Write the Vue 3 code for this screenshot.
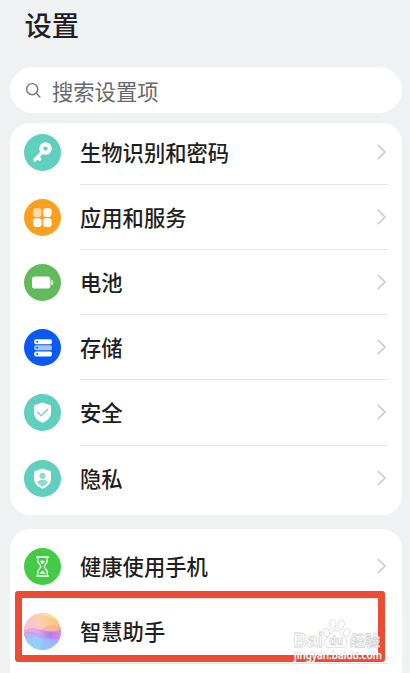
<script setup>
const groups = [
  [
    { id: 'key', label: '生物识别和密码', color: '#5fcfbe' },
    { id: 'apps', label: '应用和服务', color: '#fa9f1e' },
    { id: 'battery', label: '电池', color: '#62bb5a' },
    { id: 'storage', label: '存储', color: '#0a59f5' },
    { id: 'safe', label: '安全', color: '#5fcfbe' },
    { id: 'privacy', label: '隐私', color: '#5fcfbe' },
  ],
  [
    { id: 'health', label: '健康使用手机', color: '#43cb46' },
    { id: 'assistant', label: '智慧助手', color: '#e9c8e8' },
  ],
]
</script>

<template>
  <main class="screen">
    <h1>设置</h1>
    <div class="search">
      <svg width="17" height="17" viewBox="0 0 18 18" fill="none" stroke="#77787a" stroke-width="1.5" stroke-linecap="round">
        <circle cx="7.6" cy="7.6" r="5.9" /><path d="M12 12l3.8 3.9" />
      </svg>
      <span>搜索设置项</span>
    </div>

    <section v-for="(group, g) in groups" :key="g" class="card" :class="'card-' + g">
      <div v-for="item in group" :key="item.id" class="row">
        <svg class="icon" viewBox="0 0 37 37">
          <defs v-if="item.id === 'assistant'">
            <clipPath id="orb"><circle cx="18.5" cy="18.5" r="18.5" /></clipPath>
            <linearGradient id="top" x1="0" y1="0.6" x2="1" y2="0.2"><stop offset="0" stop-color="#f5b3cb" /><stop offset=".5" stop-color="#fbcfae" /><stop offset="1" stop-color="#fcc56c" /></linearGradient>
            <linearGradient id="mid" x1="0" y1="0" x2="1" y2="0"><stop offset="0" stop-color="#f3a9cc" /><stop offset=".4" stop-color="#e3a2e6" /><stop offset=".7" stop-color="#b57af2" /><stop offset="1" stop-color="#d78be8" /></linearGradient>
            <linearGradient id="low" x1="0.8" y1="0" x2=".3" y2="1"><stop offset="0" stop-color="#b58bf5" /><stop offset=".45" stop-color="#a3b2fb" /><stop offset="1" stop-color="#7fd0fd" /></linearGradient>
          </defs>
          <circle cx="18.5" cy="18.5" r="18.5" :fill="item.color" />

          <g v-if="item.id === 'key'">
            <circle cx="21.5" cy="14.5" r="4.2" fill="none" stroke="#fff" stroke-width="4.2" />
            <path d="M18 18.3L10.9 26M13.8 23.3l1.8 1.8" fill="none" stroke="#fff" stroke-width="3.4" stroke-linecap="round" />
          </g>
          <g v-else-if="item.id === 'apps'" fill="#fff">
            <rect x="9" y="9.3" width="8.6" height="8.6" rx="2.8" opacity=".62" />
            <rect x="19" y="9.3" width="8.6" height="8.6" rx="2.8" />
            <rect x="9" y="19.3" width="8.6" height="8.6" rx="2.8" />
            <rect x="19" y="19.3" width="8.6" height="8.6" rx="2.8" />
          </g>
          <g v-else-if="item.id === 'battery'" fill="#fff">
            <rect x="8" y="12.6" width="18.4" height="12" rx="2.8" />
            <path d="M27 16h.5q1.7 0 1.7 1.5v2.2q0 1.5-1.7 1.5H27z" opacity=".65" />
          </g>
          <g v-else-if="item.id === 'storage'">
            <rect x="10.2" y="10.2" width="17.8" height="5" rx="1.9" fill="#fff" />
            <rect x="10.2" y="16.3" width="17.8" height="5" rx="1.9" fill="#a8c5fc" />
            <rect x="10.2" y="22.4" width="17.8" height="5" rx="1.9" fill="#fff" />
            <g fill="#0a59f5"><circle cx="13.2" cy="12.7" r="1" /><circle cx="13.2" cy="18.8" r="1" /><circle cx="13.2" cy="24.9" r="1" /></g>
          </g>
          <g v-else-if="item.id === 'safe' || item.id === 'privacy'">
            <path d="M18.5 8.4L26 11.1q1 .4 1 1.4v6.2c0 5-3.6 7.7-8.5 10.1-4.9-2.4-8.5-5.1-8.5-10.1v-6.2q0-1 1-1.4z" fill="#fff" />
            <path v-if="item.id === 'safe'" d="M13.7 18.2l3.5 3.5 6.4-6.3" fill="none" stroke="#7bd5c8" stroke-width="1.5" stroke-linecap="round" stroke-linejoin="round" />
            <g v-else fill="#8edbd0"><circle cx="18.5" cy="15.8" r="3.1" /><path d="M13.1 22.3q1.3-2.6 5.4-2.6t5.4 2.6c-1.2 2-3 3.2-5.4 4.2-2.4-1-4.2-2.2-5.4-4.2z" /></g>
          </g>
          <g v-else-if="item.id === 'health'" fill="none" stroke="#fff" stroke-linecap="round" stroke-linejoin="round">
            <path d="M12.9 9.2h11.2M12.9 28h11.2" stroke-width="1.7" />
            <path d="M13.7 9.5v3.1c0 2.9 3 3.9 3 5.9s-3 3-3 5.9v3.1M23.3 9.5v3.1c0 2.9-3 3.9-3 5.9s3 3 3 5.9v3.1" stroke-width="1.4" />
            <path d="M16.4 13.2q2-.8 4.2 0l-2.1 2.5zM16 25.2l2.5-2.2 2.5 2.2z" fill="#fff" stroke-width=".6" />
          </g>
          <g v-else clip-path="url(#orb)">
            <path d="M0 0h37v37H0z" fill="url(#top)" />
            <path d="M9 2C20 1 29 6 37 9V0H9z" fill="#fbe1a4" opacity=".8" />
            <path d="M0 10Q13 4 22 18H0z" fill="#f8c6d3" opacity=".7" />
            <path d="M17 17Q27 9 37 14v9H15z" fill="#fba889" opacity=".65" />
            <path d="M0 17C9 13 16 17 22 18s10 1 15-2v14H0z" fill="url(#mid)" />
            <path d="M0 20Q8 17 15 22t22 3v12H0z" fill="url(#low)" />
            <path d="M0 21Q10 18 17 25q-7 4-17 3z" fill="#c3b4f5" opacity=".6" />
            <path d="M0 27Q10 22 20 26l-5 11H0z" fill="#8fd8fd" opacity=".6" />
          </g>
        </svg>
        <div class="content">
          <span>{{ item.label }}</span>
          <svg class="chevron" width="10" height="16" viewBox="0 0 10 16" fill="none" stroke="#c6c7c9" stroke-width="1.5" stroke-linecap="round" stroke-linejoin="round"><path d="M1.2 1.2L8 8l-6.8 6.8" /></svg>
        </div>
      </div>
    </section>

    <div class="highlight"></div>
    <svg class="watermark" width="94" height="46" viewBox="0 0 94 46">
      <g fill="#fff" fill-opacity=".75" stroke="#d6d6d6" stroke-width=".8">
        <ellipse cx="34.5" cy="15.5" rx="3" ry="4.4" transform="rotate(-15 34.5 15.5)" />
        <ellipse cx="40.6" cy="7.5" rx="3.2" ry="4.7" />
        <ellipse cx="49" cy="7.8" rx="3.2" ry="4.7" transform="rotate(12 49 7.8)" />
        <ellipse cx="54.8" cy="15.5" rx="3" ry="4.3" transform="rotate(22 54.8 15.5)" />
        <path d="M44 13.5c4 0 5 4.2 8 7 4.5 4 3.5 10-2 10-3 0-8-.6-12 0-6 .8-7.500-6-3-10 3.500-3 5-7 9-7z" />
        <text x="1" y="29.5" font-size="20" textLength="30" lengthAdjust="spacingAndGlyphs" class="brand">Bai</text>
        <text x="37" y="28" font-size="13" textLength="14" lengthAdjust="spacingAndGlyphs" class="brand">du</text>
        <text x="58" y="29" font-size="15" textLength="30" lengthAdjust="spacingAndGlyphs" class="brand">经验</text>
      </g>
      <text x="2" y="41.500" font-size="10.500" textLength="88" lengthAdjust="spacingAndGlyphs" class="url">jingyan.baidu.com</text>
    </svg>
  </main>
</template>

<style>
body { margin: 0; background: #f0f1f3; overflow: hidden; }
</style>

<style scoped>
.screen {
  position: relative;
  box-sizing: border-box;
  width: 410px;
  height: 673px;
  padding: 0 8px 0 10px;
  overflow: hidden;
  background: #f0f1f3;
  color: #1f1f21;
  font-family: "Noto Sans CJK SC", sans-serif;
}
h1 {
  height: 48px;
  margin: 0;
  padding: 0 0 19px 14.5px;
  font-size: 27.3px;
  font-weight: 500;
  line-height: 48px;
}
.search {
  display: flex;
  align-items: center;
  gap: 10px;
  height: 46px;
  padding-left: 15px;
  border-radius: 23px;
  background: #fff;
  color: #68696b;
  font-size: 21.3px;
}
.card {
  overflow: hidden;
  border-radius: 20px;
  background: #fff;
}
.card-0 { height: 392px; margin-top: 10px; }
.card-1 { height: 164px; margin-top: 14px; padding-top: 4.5px; }
.card-0 .row:first-child { margin-top: -3.2px; }
.row {
  display: flex;
  align-items: center;
  gap: 19px;
  height: 65.15px;
  padding: 0 14px;
}
.icon { flex: none; width: 37px; height: 37px; }
.content {
  display: flex;
  flex: 1;
  align-items: center;
  justify-content: space-between;
  box-sizing: border-box;
  height: 100%;
  padding-right: 1px;
  border-bottom: 1px solid #e6e6e7;
  font-size: 21.3px;
  font-weight: 500;
  line-height: 32px;
  white-space: nowrap;
}
.card-0 .row:last-child .content { border-color: transparent; }
.highlight {
  position: absolute;
  left: 15px;
  top: 591px;
  box-sizing: border-box;
  width: 370px;
  height: 71px;
  border: 7px solid #ec4b36;
  border-radius: 3px;
}
.watermark { position: absolute; left: 292px; top: 617px; }
.brand { font-family: "Liberation Sans", "Noto Sans CJK SC", sans-serif; font-weight: 700; }
.url { font-family: "Noto Sans", sans-serif; font-weight: 500; fill: #fff; stroke: #b8b8b8; stroke-width: 1px; stroke-opacity: .5; paint-order: stroke; }
</style>
